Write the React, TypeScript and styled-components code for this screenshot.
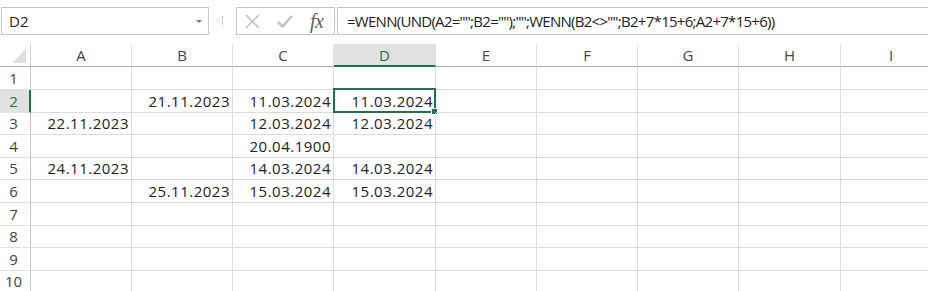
import React from 'react';
import styled, { createGlobalStyle } from 'styled-components';

const GREEN = '#217346';
const GRID = '#dadcdd';

const GlobalStyle = createGlobalStyle`
  html, body { margin: 0; padding: 0; background: #fff; }
  body { font-family: "Open Sans", "Liberation Sans", sans-serif; overflow: hidden; }
  #root { width: 928px; height: 291px; overflow: hidden; }
`;

const Page = styled.div`
  width: 928px;
  height: 291px;
  overflow: hidden;
  background: #fff;
`;

const FormulaBar = styled.div`
  display: flex;
  align-items: flex-start;
  height: 44px;
  box-sizing: border-box;
  padding: 7px 0 0 1px;
`;

const NameBox = styled.div`
  width: 208px;
  height: 28px;
  box-sizing: border-box;
  border: 1px solid #c6c6c6;
  display: flex;
  align-items: center;
  justify-content: space-between;
  padding: 0 6px 0 7px;
  font-size: 15px;
  color: #222;
`;

const DropArrow = styled.span`
  width: 0;
  height: 0;
  border-left: 3px solid transparent;
  border-right: 3px solid transparent;
  border-top: 3px solid #777;
`;

const Grip = styled.div`
  width: 27px;
  height: 28px;
  display: flex;
  justify-content: center;
  align-items: center;
`;

const GripDots = styled.span`
  width: 1px;
  height: 10px;
  border-left: 1px dotted #a8a8a8;
`;

const IconBox = styled.div`
  width: 99px;
  height: 28px;
  box-sizing: border-box;
  border: 1px solid #c6c6c6;
  display: flex;
  align-items: center;
  padding-left: 8px;
  gap: 17px;
`;

const Fx = styled.span`
  font-family: "Liberation Serif", "DejaVu Serif", serif;
  font-style: italic;
  font-size: 20px;
  color: #5f5f5f;
  letter-spacing: -0.5px;
  line-height: 1;
`;

const FormulaInput = styled.div`
  flex: 1;
  margin-left: 2px;
  height: 28px;
  box-sizing: border-box;
  border: 1px solid #c6c6c6;
  border-right: none;
  display: flex;
  align-items: center;
  padding-left: 9px;
  font-size: 15px;
  letter-spacing: -0.72px;
  color: #222;
  white-space: nowrap;
`;

const Sheet = styled.div`
  display: grid;
  grid-template-columns: 31px 101px 101px 101px 102px 101px 101px 101px 102px 101px;
  grid-template-rows: 23px 23px 23px 22px 23px 22px 23px 23px 22px 23px 22px;
`;

const Corner = styled.div`
  box-sizing: border-box;
  border-right: 1px solid #d4d4d4;
  border-bottom: 1px solid #ababab;
  display: flex;
  justify-content: flex-end;
  align-items: flex-end;
  padding: 0 4px 3px 0;
`;

const CornerTriangle = styled.span`
  width: 0;
  height: 0;
  border-left: 14px solid transparent;
  border-bottom: 14px solid #dfdfdf;
`;

const ColHeader = styled.div<{ $sel?: boolean }>`
  box-sizing: border-box;
  border-right: 1px solid #e1e1e1;
  border-bottom: ${(p) => (p.$sel ? `2px solid ${GREEN}` : '1px solid #ababab')};
  background: ${(p) => (p.$sel ? '#e1e1e1' : '#fff')};
  color: ${(p) => (p.$sel ? GREEN : '#444')};
  font-size: 15px;
  display: flex;
  justify-content: center;
  align-items: flex-end;
  padding-bottom: ${(p) => (p.$sel ? '0px' : '1px')};
  line-height: 20px;
`;

const RowHeader = styled.div<{ $sel?: boolean }>`
  box-sizing: border-box;
  border-right: ${(p) => (p.$sel ? `2px solid ${GREEN}` : '1px solid #c6c6c6')};
  border-bottom: 1px solid #e1e1e1;
  background: ${(p) => (p.$sel ? '#e1e1e1' : '#fff')};
  color: ${(p) => (p.$sel ? GREEN : '#444')};
  font-size: 15px;
  display: flex;
  justify-content: center;
  align-items: flex-end;
  padding: 0 ${(p) => (p.$sel ? '2px' : '3px')} 1px 0;
  line-height: 20px;
`;

const Cell = styled.div`
  position: relative;
  box-sizing: border-box;
  border-right: 1px solid ${GRID};
  border-bottom: 1px solid ${GRID};
  font-size: 15px;
  letter-spacing: 0.5px;
  color: #222;
  display: flex;
  justify-content: flex-end;
  align-items: flex-end;
  padding: 0 2px 1px 0;
  line-height: 20px;
  white-space: nowrap;
`;

const Selection = styled.span`
  position: absolute;
  top: -2px;
  left: -1px;
  right: -1px;
  bottom: -1px;
  border: 2px solid ${GREEN};
  pointer-events: none;
`;

const FillHandle = styled.span`
  position: absolute;
  right: -4px;
  bottom: -4px;
  width: 5px;
  height: 5px;
  background: ${GREEN};
  border: 1px solid #fff;
`;

const COLS = ['A', 'B', 'C', 'D', 'E', 'F', 'G', 'H', 'I'];

const DATA: Record<number, Record<string, string>> = {
  2: { B: '21.11.2023', C: '11.03.2024', D: '11.03.2024' },
  3: { A: '22.11.2023', C: '12.03.2024', D: '12.03.2024' },
  4: { C: '20.04.1900' },
  5: { A: '24.11.2023', C: '14.03.2024', D: '14.03.2024' },
  6: { B: '25.11.2023', C: '15.03.2024', D: '15.03.2024' },
};

const XIcon = () => (
  <svg width="15" height="15" viewBox="0 0 15 15">
    <path d="M1 1 L14 14 M14 1 L1 14" stroke="#bdbdbd" strokeWidth="1.4" fill="none" />
  </svg>
);

const CheckIcon = () => (
  <svg width="16" height="13" viewBox="0 0 16 13">
    <path d="M1 7 L5.5 11.5 L15 1" stroke="#c4c4c4" strokeWidth="2.6" fill="none" />
  </svg>
);

export default function App() {
  const rows = Array.from({ length: 10 }, (_, i) => i + 1);
  return (
    <Page>
      <GlobalStyle />
      <FormulaBar>
        <NameBox>
          <span>D2</span>
          <DropArrow />
        </NameBox>
        <Grip>
          <GripDots />
        </Grip>
        <IconBox>
          <XIcon />
          <CheckIcon />
          <Fx>fx</Fx>
        </IconBox>
        <FormulaInput>=WENN(UND(A2="";B2="");"";WENN(B2&lt;&gt;"";B2+7*15+6;A2+7*15+6))</FormulaInput>
      </FormulaBar>
      <Sheet>
        <Corner>
          <CornerTriangle />
        </Corner>
        {COLS.map((c) => (
          <ColHeader key={c} $sel={c === 'D'}>
            {c}
          </ColHeader>
        ))}
        {rows.map((r) => (
          <React.Fragment key={r}>
            <RowHeader $sel={r === 2}>{r}</RowHeader>
            {COLS.map((c) => {
              const sel = r === 2 && c === 'D';
              return (
                <Cell key={c}>
                  {DATA[r]?.[c] ?? ''}
                  {sel && (
                    <Selection>
                      <FillHandle />
                    </Selection>
                  )}
                </Cell>
              );
            })}
          </React.Fragment>
        ))}
      </Sheet>
    </Page>
  );
}
